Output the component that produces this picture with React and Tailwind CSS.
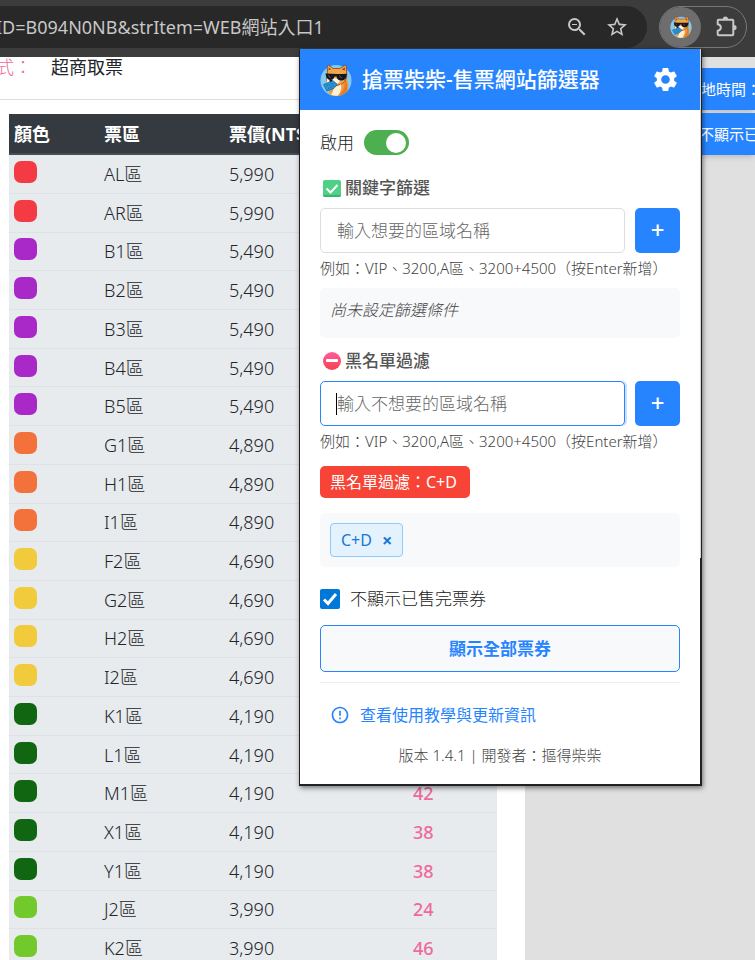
import React from "react";
import { MdZoomOut, MdStarOutline, MdSettings, MdErrorOutline } from "react-icons/md";

const rows = [
  ["AL區", "5,990", "", "bg-[#f43b43]"],
  ["AR區", "5,990", "", "bg-[#f43b43]"],
  ["B1區", "5,490", "", "bg-[#a928c8]"],
  ["B2區", "5,490", "", "bg-[#a928c8]"],
  ["B3區", "5,490", "", "bg-[#a928c8]"],
  ["B4區", "5,490", "", "bg-[#a928c8]"],
  ["B5區", "5,490", "", "bg-[#a928c8]"],
  ["G1區", "4,890", "", "bg-[#f3723b]"],
  ["H1區", "4,890", "", "bg-[#f3723b]"],
  ["I1區", "4,890", "", "bg-[#f3723b]"],
  ["F2區", "4,690", "", "bg-[#f1cb3b]"],
  ["G2區", "4,690", "", "bg-[#f1cb3b]"],
  ["H2區", "4,690", "", "bg-[#f1cb3b]"],
  ["I2區", "4,690", "", "bg-[#f1cb3b]"],
  ["K1區", "4,190", "", "bg-[#106611]"],
  ["L1區", "4,190", "", "bg-[#106611]"],
  ["M1區", "4,190", "42", "bg-[#106611]"],
  ["X1區", "4,190", "38", "bg-[#106611]"],
  ["Y1區", "4,190", "38", "bg-[#106611]"],
  ["J2區", "3,990", "24", "bg-[#72c92b]"],
  ["K2區", "3,990", "46", "bg-[#72c92b]"],
];

function Shiba({ className }) {
  return (
    <svg viewBox="0 0 32 32" className={className} aria-hidden="true">
      <circle cx="16" cy="16.5" r="15.5" fill="#85c9ec" />
      <path d="M9 30c1-4 0-7 3-11l13-8c2 4 4 9 3 15-3 5-12 8-19 4z" fill="#f39a3d" />
      <path d="M24 13c3 4 4 9 3 14-2 3-5 4-8 4 5-4 7-10 5-18z" fill="#e57b22" />
      <path d="M7.500 8.500 7.200 2l1.300-.8L13 4.500h7L25 1l1.300.8.4 8c.3 4-1 7-4 9.500-3 2-9 3-13 1.200C6.500 19 5.800 14 7.500 8.500z" fill="#f6a445" stroke="#6b3a1b" strokeWidth=".7" />
      <path d="M8.700 6V3.500l2.300 2zM24.800 6.500V3.300L22 5.500z" fill="#8b3f1f" />
      <path d="M7 14c2-2 5-2 7 0l6 1.500c0 3-3 5.500-7 6-4 .2-7-2.500-6-7.500z" fill="#fff3e0" />
      <path d="M13 22c3 1 6 0 8-2 1 4 0 8-3 11.500-3 .5-5 0-7-1 2-3 3-5 2-8.500z" fill="#fff0d8" />
      <path d="M5.500 9.500c7 .6 14 .6 21.500.2l-.5 2.300c-1 3.500-2.500 4.500-5.500 4.500-2.500 0-4-1.500-4.500-4h-2c-.5 2.500-1.800 3.500-4 3.500-2.500 0-4-2-4.500-4z" fill="#15181f" />
      <path d="m8 11.500 2.500 2M19 11.500l3 2.500" stroke="#65717f" strokeWidth=".8" />
      <ellipse cx="11" cy="17" rx="1.700" ry="1.200" fill="#24170f" />
      <path d="m3.500 20.500 9.500-3.700 4.300 3.500-3.500 4.200-7 2.500z" fill="#2b95d6" stroke="#1a5f97" strokeWidth=".7" />
      <path d="m6.500 22 8-3M8 24.500l7-3" stroke="#14598f" strokeWidth=".7" strokeDasharray="1.500 1" />
    </svg>
  );
}

function Toolbar() {
  return (
    <header className="flex h-[57px] shrink-0 items-start bg-[#3c3c3c] pt-1.5 pr-2">
      <div className="flex h-[42px] min-w-0 flex-1 items-center rounded-r-full bg-[#282828] pr-[18px] text-[#c7c7c7]">
        <div className="flex min-w-0 flex-1 justify-start overflow-hidden text-lg whitespace-nowrap">
          <span className="-ml-1">ID=B094N0NB&amp;strItem=WEB網站入口1</span>
        </div>
        <button type="button" aria-label="縮小" className="mr-4">
          <MdZoomOut size={24} />
        </button>
        <button type="button" aria-label="加入書籤">
          <MdStarOutline size={24} />
        </button>
      </div>
      <div className="ml-3 flex h-[42px] w-[88px] items-center justify-between rounded-full border border-[#777] pr-2">
        <button type="button" aria-label="搶票柴柴" className="flex h-10 w-[41px] items-center justify-center rounded-full bg-[#6e6e6e]">
          <Shiba className="size-[22px]" />
        </button>
        <button type="button" aria-label="擴充功能">
          <svg width="24" height="24" viewBox="0 0 24 24" aria-hidden="true">
            <path d="M4.700 4.700h13.600a1 1 0 0 1 1 1v13.600a1 1 0 0 1-1 1H4.700a1 1 0 0 1-1-1v-3.600c4.200-.8 4.200-5.600 0-6.400V5.700a1 1 0 0 1 1-1z" fill="none" stroke="#c7c7c7" strokeWidth="2" strokeLinejoin="round" />
            <path d="M8.800 4a2.600 2.600 0 0 1 5.200 0zM20 9.900a2.600 2.600 0 0 1 0 5.200z" fill="#c7c7c7" />
          </svg>
        </button>
      </div>
    </header>
  );
}

function SeatTable() {
  return (
    <table className="mt-3.5 ml-[9px] h-[854px] w-[488px] table-fixed border-collapse text-lg leading-6 text-[#212529]">
      <colgroup>
        <col className="w-[90px]" />
        <col className="w-[125px]" />
        <col className="w-[184px]" />
        <col />
      </colgroup>
      <thead>
        <tr className="h-10 border-b-2 border-[#454d55] bg-[#343a40] text-left font-bold text-white">
          <th className="px-[5px]">顏色</th>
          <th className="px-[5px]">票區</th>
          <th className="px-[5px]">票價(NT$)</th>
          <th className="px-[5px]">空位</th>
        </tr>
      </thead>
      <tbody className="font-light">
        {rows.map(([zone, price, left, color]) => (
          <tr key={zone} className="border-b border-[#dee2e6] bg-[#e8ebee]">
            <td className="px-[5px] pb-1">
              <div className={`h-[22px] w-[23px] rounded-[7px] ${color}`} />
            </td>
            <td className="px-[5px]">{zone}</td>
            <td className="px-[5px]">{price}</td>
            <td className="px-[5px] font-medium text-[#ee6a99]">{left}</td>
          </tr>
        ))}
      </tbody>
    </table>
  );
}

function FilterField({ id, placeholder, active }) {
  return (
    <>
      <div className="flex gap-2.5">
        <div className="relative min-w-0 flex-1">
          <input
            id={id}
            type="text"
            placeholder={placeholder}
            className={`h-[45px] w-full rounded-[5px] border bg-white px-4 text-[17px] font-light outline-none placeholder:text-[#666] ${
              active ? "border-[#2684ff] shadow-[2px_0_0_#c9e0ff]" : "border-[#dddddd]"
            }`}
          />
          {active && <span className="absolute top-3 left-4 h-[22px] w-px bg-black" />}
        </div>
        <button type="button" aria-label="新增" className="flex size-[45px] items-center justify-center rounded-[5px] bg-[#2684ff] pb-0.5 text-2xl font-medium text-white">
          +
        </button>
      </div>
      <p className="mt-1 text-[15px] leading-[23px] font-light text-[#444]">例如：VIP、3200,A區、3200+4500（按Enter新增）</p>
    </>
  );
}

function Popup() {
  return (
    <section className="absolute top-[49px] right-[53px] w-[403px] border-r-2 border-b-2 border-l border-[#202124] bg-white text-[#222] shadow-[1px_2px_5px_rgba(0,0,0,0.5)]">
      <div className="absolute top-0 -right-px h-[509px] w-px bg-[#d5d5d5]" />
      <div className="flex h-[61px] items-center bg-[#2684ff] px-5 text-white">
        <Shiba className="size-8" />
        <h1 className="ml-2.5 flex-1 text-[21px] font-medium">搶票柴柴-售票網站篩選器</h1>
        <button type="button" aria-label="設定">
          <MdSettings size={29} />
        </button>
      </div>
      <div className="px-5 pt-5 pb-[17px]">
        <label className="flex h-[25px] items-center gap-2.5 text-[17px] font-light">
          啟用
          <input type="checkbox" defaultChecked className="peer sr-only" />
          <span className="flex h-[25px] w-[45px] items-center rounded-full bg-[#4caf50] p-[3px] peer-checked:justify-end">
            <span className="size-5 rounded-full bg-white" />
          </span>
        </label>

        <label htmlFor="include" className="mt-5 mb-2 flex items-center gap-1 text-[17px] leading-[25px] font-medium text-[#555]">
          <svg width="21" height="20" viewBox="0 0 21 20" aria-hidden="true">
            <rect x="3" y="2" width="18" height="17" rx="2" fill="#50cf86" />
            <path d="M3 17h18v0a2 2 0 0 1-2 2H5a2 2 0 0 1-2-2z" fill="#35b56e" />
            <path d="m6.500 10.500 4 4 7-7.500" fill="none" stroke="#fff" strokeWidth="2" />
          </svg>
          關鍵字篩選
        </label>
        <FilterField id="include" placeholder="輸入想要的區域名稱" />
        <div className="mt-2 h-[50px] rounded-[5px] bg-[#f8f9fb] p-2.5 text-base font-light text-[#444] italic">尚未設定篩選條件</div>

        <label htmlFor="exclude" className="mt-2.5 mb-2 flex items-center gap-1 text-[17px] leading-[25px] font-medium text-[#555]">
          <svg width="21" height="20" viewBox="0 0 21 20" aria-hidden="true">
            <defs>
              <linearGradient id="stop" x1="0" y1="0" x2="0" y2="1">
                <stop offset="0" stopColor="#ff5c9e" />
                <stop offset="1" stopColor="#f9414d" />
              </linearGradient>
            </defs>
            <circle cx="12" cy="10" r="9" fill="url(#stop)" />
            <rect x="6" y="8" width="12" height="3" rx="1" fill="#fff" />
          </svg>
          黑名單過濾
        </label>
        <FilterField id="exclude" placeholder="輸入不想要的區域名稱" active />

        <div className="mt-[13px] flex h-8 w-[150px] items-center rounded-[5px] bg-[#f84436] px-2.5 text-base text-white">黑名單過濾：C+D</div>
        <div className="mt-[15px] rounded-[5px] bg-[#f8f9fb] p-2.5">
          <div className="flex h-[34px] w-fit items-center gap-2.5 rounded-[4px] border border-[#90caf9] bg-[#e3f2fd] px-2.5 text-base text-[#1976d2]">
            C+D
            <button type="button" aria-label="移除 C+D" className="text-lg font-bold">×</button>
          </div>
        </div>

        <label className="mt-5 flex h-6 items-center gap-2.5 text-[17px] font-light">
          <input type="checkbox" defaultChecked className="peer sr-only" />
          <svg width="20" height="20" viewBox="0 0 20 20" aria-hidden="true">
            <rect width="20" height="20" rx="2" fill="#0078d7" />
            <path d="m4 10.500 4 4 8-9.500" fill="none" stroke="#fff" strokeWidth="3" />
          </svg>
          不顯示已售完票券
        </label>
        <button type="button" className="mt-3.5 h-[47px] w-full rounded-[5px] border border-[#2684ff] bg-[#f8f9fb] text-[17px] font-bold text-[#2684ff]">
          顯示全部票券
        </button>
        <hr className="mt-2.5 border-[#eeeeee]" />
        <a href="#guide" className="mt-5 flex h-6 items-center gap-2.5 pl-2.5 text-base text-[#2684ff]">
          <MdErrorOutline size={20} />
          查看使用教學與更新資訊
        </a>
        <p className="mt-4 text-center text-[15px] leading-6 font-light text-[#444]">版本 1.4.1 | 開發者：摳得柴柴</p>
      </div>
    </section>
  );
}

export default function App() {
  return (
    <div className="relative flex h-screen flex-col overflow-hidden bg-[#e0e0e0] font-['Noto_Sans','Noto_Sans_CJK_TC',sans-serif]">
      <Toolbar />
      <main className="relative min-h-0 flex-1 overflow-hidden">
        <div className="w-[525px] bg-white">
          <div className="flex h-[43px] gap-5 border-b border-[#dddddd] text-lg leading-5">
            <span className="-ml-1 w-[35px] font-light whitespace-nowrap text-[#ee6a99]">式：</span>
            <span className="text-[#212529]">超商取票</span>
          </div>
          <SeatTable />
        </div>
        <div className="absolute top-[11px] right-0 flex w-[60px] flex-col gap-[3px] overflow-hidden pb-2 text-[15px] text-white">
          <div className="flex h-[42px] items-center bg-[#2684ff] pl-1.5 whitespace-nowrap shadow-md">地時間：</div>
          <div className="flex h-[42px] items-center bg-[#2684ff] pl-1 whitespace-nowrap shadow-md">不顯示已</div>
        </div>
      </main>
      <Popup />
    </div>
  );
}
